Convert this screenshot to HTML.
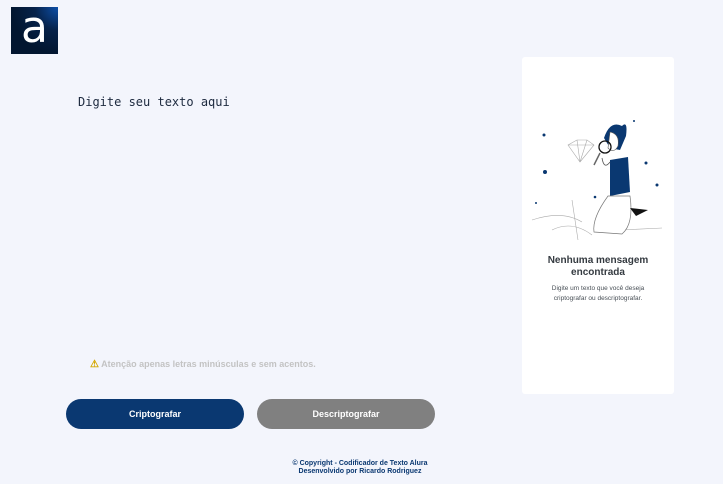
<!DOCTYPE html>
<html><head><meta charset="utf-8"><style>
*{margin:0;padding:0;box-sizing:border-box}
body{width:723px;height:484px;background:#f3f5fc;font-family:"Liberation Sans",sans-serif;position:relative;overflow:hidden}
.logo{position:absolute;left:11px;top:7px;width:47px;height:47px;background:radial-gradient(circle at 100% 0%,#0d4fa8 0%,#06224a 35%,#021630 70%);}
.logo span{position:absolute;left:0;top:-5px;width:47px;text-align:center;color:#fff;font-size:44px;font-family:"DejaVu Sans",sans-serif}
.ph{position:absolute;left:78px;top:95px;font-family:"DejaVu Sans Mono","Liberation Mono",monospace;font-size:12px;color:#1d2a3f}
.warn{position:absolute;left:90px;top:359px;font-size:9px;font-weight:bold;color:#c3c3c3}
.warn b{color:#d4a800;font-size:10px}
.btn{position:absolute;top:399px;height:30px;border-radius:15px;color:#fff;font-size:9px;font-weight:bold;text-align:center;line-height:30px}
.b1{left:66px;width:178px;background:#0a3871}
.b2{left:257px;width:178px;background:#808080}
.foot{position:absolute;left:260px;top:460px;width:200px;text-align:center;font-size:7px;font-weight:bold;color:#0a3871;line-height:8px}
.panel{position:absolute;left:522px;top:57px;width:152px;height:337px;background:#fff;border-radius:3px}
.t1{position:absolute;left:0;top:198px;width:152px;text-align:center;font-size:10px;font-weight:bold;color:#343a40;line-height:12px}
.t2{position:absolute;left:0;top:227px;width:152px;text-align:center;font-size:6.5px;color:#495057;line-height:10px}
</style></head><body>
<div class="logo"><span>a</span></div>
<div class="ph">Digite seu texto aqui</div>
<div class="warn"><b>⚠</b> Atenção apenas letras minúsculas e sem acentos.</div>
<div class="btn b1">Criptografar</div>
<div class="btn b2">Descriptografar</div>
<div class="foot">© Copyright - Codificador de Texto Alura<br>Desenvolvido por Ricardo Rodriguez</div>
<div class="panel">
<svg width="152" height="200" viewBox="0 0 152 200" style="position:absolute;left:0;top:53px">
<g fill="#0a3871"><circle cx="22" cy="25" r="1.5"/><circle cx="23" cy="62" r="2"/><circle cx="124" cy="53" r="1.5"/><circle cx="135" cy="75" r="1.5"/><circle cx="14" cy="93" r="1"/><circle cx="73" cy="87" r="1.3"/><circle cx="112" cy="11" r="1"/></g>
<g fill="none" stroke="#aaa" stroke-width="0.6"><path d="M46 35 L55 30 L65 30 L72 35 L58 52 Z M46 35 L72 35 M55 30 L58 52 M65 30 L58 52"/><path d="M10 110 Q40 100 60 112 M30 120 Q50 110 70 125 M50 90 L56 130 M100 120 L140 118"/></g>
<path d="M82 28 Q88 10 100 16 Q106 10 104 26 L98 40 L88 38 Z" fill="#0a3871"/>
<path d="M88 22 Q98 24 96 36 Q92 44 86 38 Z" fill="#fff" stroke="#555" stroke-width="0.6"/>
<path d="M88 50 L106 47 L108 82 L88 86 Z" fill="#0a3871"/>
<path d="M88 52 Q82 60 80 48" fill="none" stroke="#555" stroke-width="0.8"/>
<path d="M86 86 Q70 108 72 122 L100 124 Q112 114 108 86 Z" fill="#fff" stroke="#777" stroke-width="0.7"/>
<path d="M108 98 L126 100 L114 106 Z" fill="#111"/>
<circle cx="83" cy="37" r="6" fill="none" stroke="#111" stroke-width="1.3"/>
<path d="M78 43 L72 55" stroke="#666" stroke-width="1.5"/>
</svg>
<div class="t1">Nenhuma mensagem<br>encontrada</div>
<div class="t2">Digite um texto que você deseja<br>criptografar ou descriptografar.</div>
</div>
</body></html>
